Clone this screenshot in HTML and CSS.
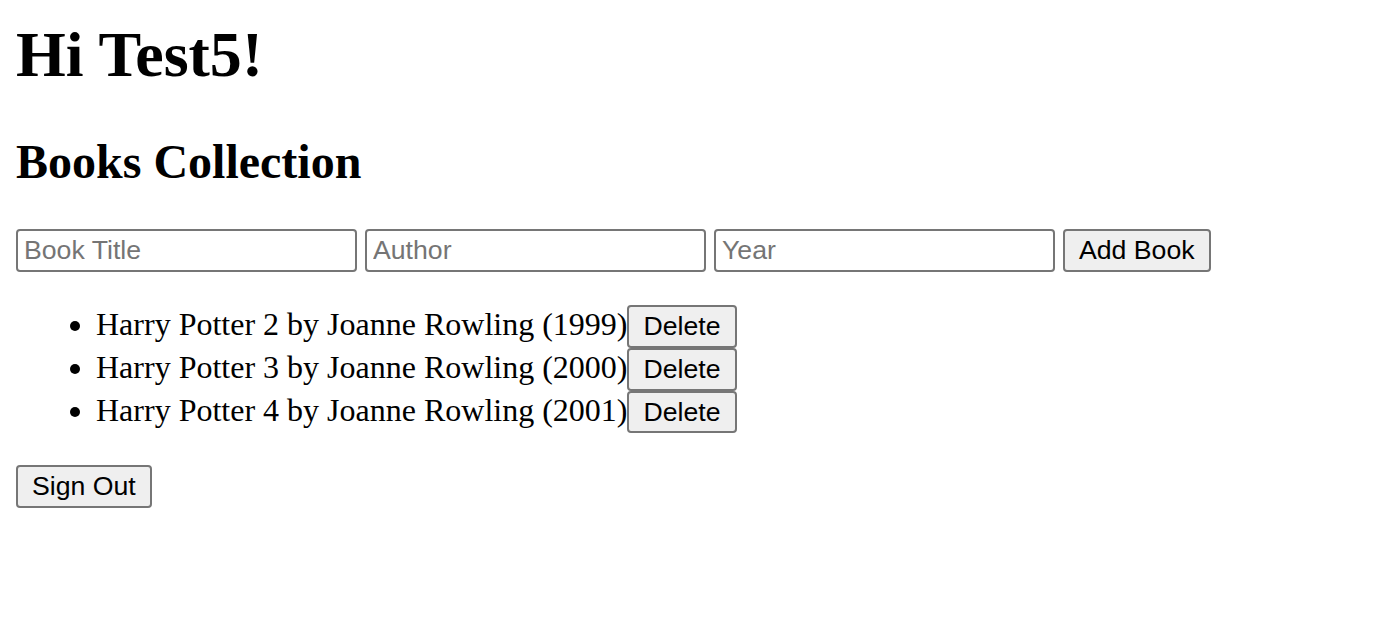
FILE: index.html
```html
<!DOCTYPE html>
<html>
<head>
<meta charset="utf-8">
<title>Books</title>
<link rel="stylesheet" href="styles.css">
</head>
<body>
<div class="page">
  <h1 class="greeting">Hi Test5!</h1>
  <h2 class="section-title">Books Collection</h2>
  <div class="add-form">
    <input class="field" type="text" placeholder="Book Title">
    <input class="field" type="text" placeholder="Author">
    <input class="field" type="text" placeholder="Year">
    <button class="btn">Add Book</button>
  </div>
  <ul class="book-list">
    <li class="book">Harry Potter 2 by Joanne Rowling (1999)<button class="btn">Delete</button></li>
    <li class="book">Harry Potter 3 by Joanne Rowling (2000)<button class="btn">Delete</button></li>
    <li class="book">Harry Potter 4 by Joanne Rowling (2001)<button class="btn">Delete</button></li>
  </ul>
  <button class="btn">Sign Out</button>
</div>
</body>
</html>
```
FILE: styles.css
```css
html, body {
  margin: 0;
  padding: 0;
  background: #ffffff;
  color: #000000;
}

.page {
  padding: 17.5px 16px 16px;
  font-family: "Liberation Serif", "Times New Roman", serif;
  font-size: 32px;
}

.greeting {
  font-size: 64px;
  font-weight: bold;
  margin: 0 0 42.88px;
}

.section-title {
  font-size: 48px;
  font-weight: bold;
  margin: 0 0 39.84px;
}

.add-form {
  display: flex;
  align-items: flex-start;
  gap: 8.33px;
}

.field {
  box-sizing: border-box;
  width: 340.67px;
  height: 42.67px;
  margin: 0;
  padding: 4px 6px;
  border: 2px solid #767676;
  border-radius: 4px;
  background: #ffffff;
  font-family: "Liberation Sans", Arial, sans-serif;
  font-size: 26.667px;
  color: #000000;
  outline: none;
}

.field::placeholder {
  color: #757575;
  opacity: 1;
}

.btn {
  box-sizing: border-box;
  height: 42.67px;
  margin: 0;
  padding: 4px 14px;
  border: 2px solid #767676;
  border-radius: 4px;
  background: #efefef;
  font-family: "Liberation Sans", Arial, sans-serif;
  font-size: 26.667px;
  line-height: normal;
  color: #000000;
}

.book-list {
  margin: 33.5px 0 32px;
  padding-left: 80px;
}

.book {
  line-height: normal;
}
```
